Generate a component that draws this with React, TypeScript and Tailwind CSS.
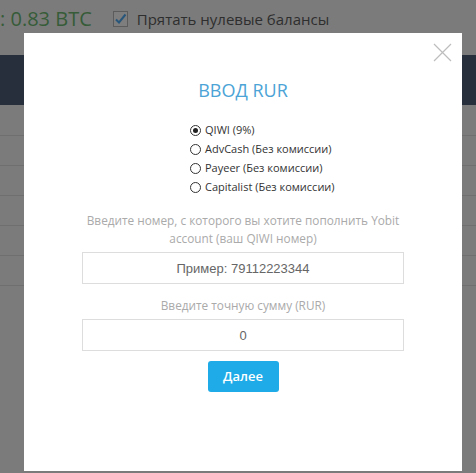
import { useState } from 'react'

const methods = [
  'QIWI (9%)',
  'AdvCash (Без комиссии)',
  'Payeer (Без комиссии)',
  'Capitalist (Без комиссии)',
]

export default function App() {
  const [method, setMethod] = useState(0)

  return (
    <div className="relative w-[476px] h-[473px] overflow-hidden bg-[#7b7b7b] font-['Open_Sans',sans-serif]">
      {/* page under the overlay */}
      <div className="h-[55px] flex items-start pt-[5px] gap-[21px]">
        <span className="text-[20px] leading-[28px] text-[#365c38]">: 0.83 BTC</span>
        <div className="flex items-center gap-[9px] mt-[3px]">
          <div className="w-[15px] h-[16px] border border-[#5c5c5c] bg-[#7e7e7e] flex items-center justify-center">
            <svg width="13" height="12" viewBox="0 0 13 12">
              <path d="M2 6.5 L5 9.5 L11.5 1.5" fill="none" stroke="#28567a" strokeWidth="2" />
            </svg>
          </div>
          <span className="text-[15px] leading-[22px] text-[#2e2e2e]">Прятать нулевые балансы</span>
        </div>
      </div>
      <div className="h-[50px] bg-[#262f3b]" />
      <div className="flex flex-col">
        <div className="h-[31px] border-b border-[#6f6f6f]" />
        {[0, 1, 2, 3, 4].map(i => (
          <div key={i} className="h-[30px] border-b border-[#6f6f6f]" />
        ))}
      </div>

      {/* modal */}
      <div className="absolute left-[24px] top-[33px] w-[438px] h-[438px] bg-white flex flex-col items-center">
        <button className="absolute right-[10px] top-[10px] w-[19px] h-[19px]">
          <svg width="19" height="19" viewBox="0 0 19 19">
            <path d="M1 1 L18 18 M18 1 L1 18" stroke="#bdbdbd" strokeWidth="1.2" />
          </svg>
        </button>

        <h2 className="mt-[45px] text-[18px] leading-[24px] text-[#4ba3d6]">ВВОД RUR</h2>

        <div className="mt-[19px] self-start ml-[166px] flex flex-col">
          {methods.map((m, i) => (
            <label
              key={m}
              onClick={() => setMethod(i)}
              className="h-[19px] flex items-center gap-[4px] text-[11px] text-[#333] cursor-pointer"
            >
              <span className="w-[11px] h-[11px] rounded-full border border-[#333] flex items-center justify-center">
                {method === i && <span className="w-[5px] h-[5px] rounded-full bg-[#222]" />}
              </span>
              {m}
            </label>
          ))}
        </div>

        <p className="mt-[14px] w-[330px] text-center text-[11.8px] leading-[18px] text-[#aaaaaa]">
          Введите номер, с которого вы хотите пополнить Yobit account (ваш QIWI номер)
        </p>
        <input
          className="mt-[5px] w-[322px] h-[32px] border border-[#dddddd] text-center text-[13px] text-[#555] font-['Liberation_Sans',sans-serif] placeholder-[#666] focus:outline-none"
          placeholder="Пример: 79112223344"
        />

        <p className="mt-[12px] text-center text-[11.8px] leading-[18px] text-[#aaaaaa]">Введите точную сумму (RUR)</p>
        <input
          className="mt-[5px] w-[322px] h-[32px] border border-[#dddddd] text-center text-[13px] text-[#666] font-['Liberation_Sans',sans-serif] focus:outline-none"
          defaultValue="0"
        />

        <button className="mt-[10px] w-[71px] h-[31px] rounded-[3px] bg-[#1eabe7] text-white text-[13px] font-semibold">
          Далее
        </button>
      </div>
    </div>
  )
}
